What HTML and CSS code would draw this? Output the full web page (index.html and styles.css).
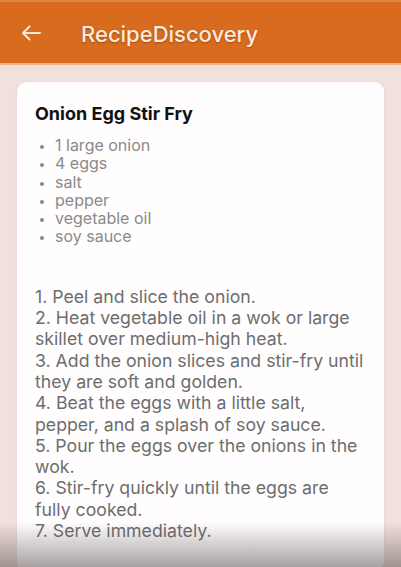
FILE: index.html
```html
<!DOCTYPE html>
<html>
<head>
<meta charset="utf-8">
<link rel="stylesheet" href="styles.css">
</head>
<body>
<header class="appbar">
  <svg class="back" width="20" height="16" viewBox="0 0 20 16"><path d="M19 8H2M8.5 1.5L2 8l6.5 6.5" fill="none" stroke="#fbeadb" stroke-width="2" stroke-linecap="round" stroke-linejoin="round"/></svg>
  <span class="title">RecipeDiscovery</span>
</header>
<main class="content">
  <section class="card">
    <h1 class="name">Onion Egg Stir Fry</h1>
    <ul class="ingredients">
      <li>1 large onion</li>
      <li>4 eggs</li>
      <li>salt</li>
      <li>pepper</li>
      <li>vegetable oil</li>
      <li>soy sauce</li>
    </ul>
    <p class="steps">1. Peel and slice the onion.<br>2. Heat vegetable oil in a wok or large skillet over medium-high heat.<br>3. Add the onion slices and stir-fry until they are soft and golden.<br>4. Beat the eggs with a little salt, pepper, and a splash of soy sauce.<br>5. Pour the eggs over the onions in the wok.<br>6. Stir-fry quickly until the eggs are fully cooked.<br>7. Serve immediately.</p>
  </section>
</main>
<div class="fade"></div>
</body>
</html>
```
FILE: styles.css
```css
html, body {
  margin: 0;
  padding: 0;
}
body {
  width: 401px;
  height: 567px;
  overflow: hidden;
  background: #f1e1dc;
  font-family: Inter, "Noto Sans", sans-serif;
  position: relative;
}
.appbar {
  background: #d96b1f;
  border-top: 2px solid #e08540;
  border-bottom: 2px solid #f2b48a;
  box-sizing: border-box;
  height: 65px;
  display: flex;
  align-items: center;
  padding-left: 21px;
}
.back {
  margin-top: 1px;
}
.title {
  margin-left: 40px;
  margin-top: 3px;
  color: #fbeadb;
  font-size: 22px;
  font-weight: 500;
  text-shadow: 0 1px 2px rgba(90, 40, 0, 0.45);
}
.content {
  padding: 17px 17px 0 17px;
}
.card {
  background: #fffdfe;
  border-radius: 9px;
  padding: 20px 17px 30px 18px;
  box-shadow: 0 0 2px rgba(0, 0, 0, 0.08);
}
.name {
  margin: 0;
  font-size: 18px;
  font-weight: 700;
  color: #111;
  line-height: 24px;
}
.ingredients {
  margin: 10px 0 0 0;
  padding-left: 20px;
  color: #8a8a8a;
  font-size: 16px;
  line-height: 18.3px;
}
.ingredients li::marker {
  font-size: 13px;
}
.steps {
  margin: 40px 0 0 0;
  color: #6d6d6d;
  font-size: 17.7px;
  line-height: 21.3px;
}
.fade {
  position: absolute;
  left: 0;
  right: 0;
  bottom: 0;
  height: 45px;
  background: linear-gradient(to bottom, rgba(80, 70, 70, 0), rgba(80, 70, 70, 0.5));
  pointer-events: none;
}
```
